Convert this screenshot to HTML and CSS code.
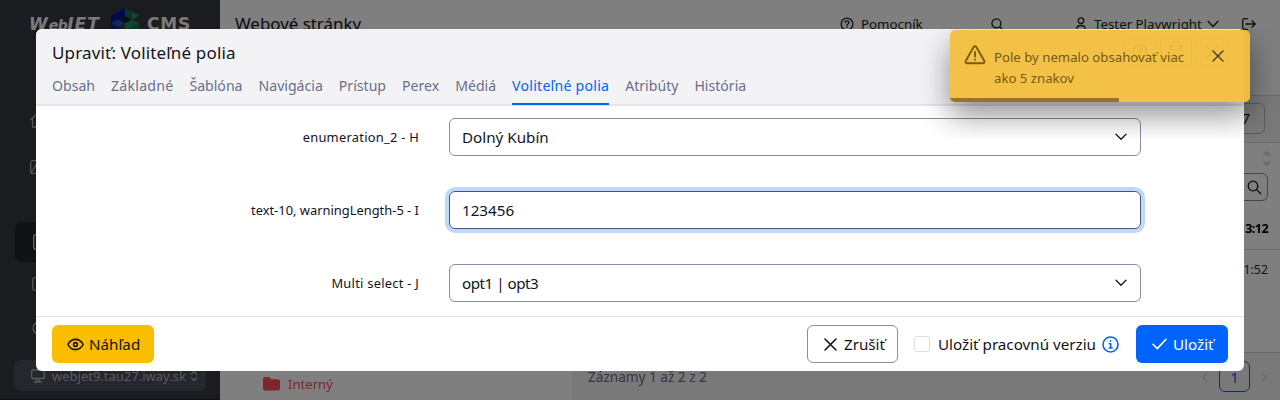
FILE: index.html
```
<!DOCTYPE html>
<html lang="sk">
<head>
<meta charset="utf-8">
<title>WebJET CMS</title>
<link rel="stylesheet" href="styles.css">
</head>
<body>
<div class="app">
  <aside class="sidebar">
    <div class="logo">
      <span class="logo-web">W<span class="logo-small">eb</span>JET</span>
      <svg class="logo-cube" width="28" height="30" viewBox="0 0 28 30"><path d="M0 7.500 14 0v15L0 22z" fill="#08149c"/><path d="M14 0 28 7.500 21 11.500 14 8z" fill="#238a52"/><path d="M14 0v15l7-3.500V4z" fill="#1d6a42"/><path d="M21 11.500 28 8 21 4z" fill="#27945a"/><path d="M0 15.500l7-4 7 4-7 4z" fill="#1a58a8"/><path d="M7 11.500l7-3.500 7 3.500-7 4z" fill="#0a2440"/><path d="M14 15.500l7-4 7 4-14 7.500z" fill="#1f8a5a"/><path d="M0 15.500 14 23v7L0 22z" fill="#0c1f9c"/><path d="M14 23l14-7.500v7L14 30z" fill="#1c6a50"/></svg>
      <span class="logo-cms">CMS</span>
    </div>
    <nav class="menu">
      <span class="menu-item home"><svg width="16" height="16" viewBox="0 0 16 16"><path d="M.7 7.500 8 1l7.300 6.500M2.500 6.500V15h4v-5h3v5h4V6.500"/></svg></span>
      <span class="menu-item image"><svg width="16" height="14" viewBox="0 0 16 14"><rect x=".7" y=".7" width="14.600" height="12.600" rx="2"/><path d="M1 13l5-8 4 6 2-2 3 3"/></svg></span>
      <span class="menu-item active"><svg width="12" height="16" viewBox="0 0 12 16"><rect x=".7" y=".7" width="10.600" height="14.600" rx="2"/></svg></span>
      <span class="menu-item page"><svg width="13" height="14" viewBox="0 0 13 14"><rect x=".7" y=".7" width="11.600" height="12.600" rx="2"/></svg></span>
      <span class="menu-item globe"><svg width="14" height="14" viewBox="0 0 14 14"><circle cx="7" cy="7" r="6"/><circle cx="7" cy="7" r="2.500"/></svg></span>
    </nav>
    <div class="domain">
      <svg width="14" height="14" viewBox="0 0 14 14"><rect x=".7" y="1" width="12.600" height="8.500" rx="1.200"/><path d="M5.500 10v2.500M8.500 10v2.500M3.500 13h7"/></svg>
      <span class="domain-name">webjet9.tau27.iway.sk</span>
      <svg class="domain-arrows" width="8" height="12" viewBox="0 0 8 12"><path d="M1.500 4 4 1.500 6.500 4M1.500 8 4 10.500 6.500 8"/></svg>
    </div>
  </aside>
  <div class="content">
    <header class="topbar">
      <span class="page-title">Webové stránky</span>
      <span class="top-link help"><svg width="14" height="14" viewBox="0 0 14 14"><circle cx="7" cy="7" r="5.900"/><path d="M5.200 5.600c0-2.400 3.700-2.300 3.700 0C8.900 7 7 6.900 7 8.300M7 9.900v.6"/></svg><span class="t-help">Pomocník</span></span>
      <span class="top-link search"><svg width="13" height="13" viewBox="0 0 13 13"><circle cx="5.400" cy="5.400" r="4.500"/><path d="M8.700 8.700 12.300 12.300"/></svg></span>
      <span class="top-link user"><svg width="10" height="14" viewBox="0 0 10 14"><circle cx="5" cy="3.700" r="2.800"/><path d="M.8 13.300v-1.500c0-4.400 8.400-4.400 8.400 0v1.500z"/></svg><span class="t-user">Tester Playwright</span><svg width="12" height="8" viewBox="0 0 12 8"><path d="M1 1.300 6 6.500 11 1.300"/></svg></span>
      <span class="top-link logout"><svg width="14" height="12" viewBox="0 0 14 12"><path d="M5.500.7h-3C1.200.7.700 1.200.7 2.500v7c0 1.300.5 1.800 1.800 1.800h3M4 6h9M10 2.800 13.200 6 10 9.200"/></svg></span>
    </header>
    <div class="columns">
      <div class="tree">
        <svg width="17" height="14" viewBox="0 0 17 14"><path d="M0 2.200C0 1 .9 0 2.100 0h4l2.200 2.200h6.600c1.200 0 2.100 1 2.100 2.100v7.100c0 1.200-1 2.100-2.100 2.100H2.100C.9 13.500 0 12.600 0 11.400z"/></svg>
        <span>Interný</span>
      </div>
      <div class="grid">
        <div class="toolbar"><span class="tool">7</span></div>
        <div class="grid-head">
          <svg class="sort" width="10" height="17" viewBox="0 0 10 17"><path d="M5 0l4.500 5.500H.5zM5 17l4.500-5.500H.5z"/></svg>
          <span class="filter"><svg width="15" height="15" viewBox="0 0 15 15"><circle cx="6" cy="6" r="4.800"/><path d="M9.600 9.600 13.800 13.800"/></svg></span>
        </div>
        <div class="grid-row strong">13:12</div>
        <div class="grid-row last">21:52</div>
        <footer class="grid-foot">
          <span class="records">Záznamy 1 až 2 z 2</span>
          <span class="pager"><svg width="6" height="10" viewBox="0 0 6 10"><path d="M5 1 1 5l4 4"/></svg><span class="page-no">1</span><svg width="6" height="10" viewBox="0 0 6 10"><path d="M1 1l4 4-4 4"/></svg></span>
        </footer>
      </div>
    </div>
  </div>
</div>

<div class="backdrop">
  <section class="modal">
    <header class="modal-head">
      <div class="modal-top">
        <h1 class="modal-title">Upraviť: Voliteľné polia</h1>
        <div class="modal-tools">
          <span class="tool-btn"><svg width="16" height="16" viewBox="0 0 14 14"><circle cx="7" cy="7" r="5.900"/><path d="M5.200 5.600c0-2.400 3.700-2.300 3.700 0C8.900 7 7 6.900 7 8.300M7 9.900v.6"/></svg></span>
          <span class="tool-btn"><svg width="16" height="16" viewBox="0 0 16 16"><path d="M2 6V2h4M10 2h4v4M14 10v4h-4M6 14H2v-4M2 2l4.500 4.500M14 2 9.500 6.500M14 14 9.500 9.500M2 14l4.500-4.500"/></svg></span>
          <span class="tool-btn"><svg width="14" height="14" viewBox="0 0 14 14"><path d="M2 2l10 10M12 2 2 12"/></svg></span>
        </div>
      </div>
      <nav class="tabs">
        <span class="tab">Obsah</span><span class="tab wide">Základné</span><span class="tab">Šablóna</span><span class="tab">Navigácia</span><span class="tab">Prístup</span><span class="tab">Perex</span><span class="tab">Médiá</span><span class="tab wide current">Voliteľné polia</span><span class="tab">Atribúty</span><span class="tab">História</span>
      </nav>
    </header>
    <div class="form">
      <label class="label wide">enumeration_2 - H</label>
      <div class="field">Dolný Kubín<svg width="12" height="8" viewBox="0 0 12 8"><path d="M1 1.200 6 6.300 11 1.200"/></svg></div>
      <label class="label">text-10, warningLength-5 - I</label>
      <div class="field focus">123456</div>
      <label class="label wide">Multi select - J</label>
      <div class="field"><span class="options">opt1 | opt3</span><svg width="12" height="8" viewBox="0 0 12 8"><path d="M1 1.200 6 6.300 11 1.200"/></svg></div>
    </div>
    <footer class="modal-foot">
      <button class="btn preview"><svg width="17" height="13" viewBox="0 0 17 13"><path d="M.9 6.500C4.400-.3 12.600-.3 16.100 6.500 12.600 13.300 4.400 13.300.9 6.500z"/><circle cx="8.500" cy="6.500" r="1.900"/></svg>Náhľad</button>
      <button class="btn cancel"><svg width="13" height="13" viewBox="0 0 13 13"><path d="M1 1l11 11M12 1 1 12"/></svg>Zrušiť</button>
      <span class="check"></span>
      <span class="check-label">Uložiť pracovnú verziu</span>
      <svg class="info" width="17" height="17" viewBox="0 0 17 17"><circle cx="8.500" cy="8.500" r="7.500"/><path d="M7.300 7.700h1.400v4M7.200 12h3M8.500 4.900v.3"/></svg>
      <button class="btn save"><svg width="15" height="12" viewBox="0 0 15 12"><path d="M1 6.300 5.300 10.600 14 1.300"/></svg>Uložiť</button>
    </footer>
  </section>
</div>

<div class="toast-area">
  <div class="toast">
    <svg class="warn" width="22" height="20" viewBox="0 0 22 20"><path d="M11 1.300c.6 0 1.200.3 1.500.9l7.700 13.500c.7 1.300-.1 2.600-1.500 2.600H3.300c-1.400 0-2.200-1.300-1.500-2.600L9.500 2.200c.3-.6.9-.9 1.500-.9z"/><path d="M11 7v4.500M11 14.400v.3"/></svg>
    <div class="toast-text">Pole by nemalo obsahovať viac<br>ako 5 znakov</div>
    <svg class="close" width="12" height="12" viewBox="0 0 12 12"><path d="M1 1l10 10M11 1 1 11"/></svg>
    <span class="progress"></span>
  </div>
</div>
</body>
</html>
```
FILE: styles.css
```
* { box-sizing: border-box; }
body {
  margin: 0;
  height: 400px;
  overflow: hidden;
  font-family: "Noto Sans", sans-serif;
  font-size: 15.2px;
  line-height: 24px;
  color: #13151b;
}
svg { display: block; flex: none; fill: none; stroke: currentColor; stroke-width: 1.3; stroke-linecap: round; stroke-linejoin: round; }

.app { display: flex; height: 400px; }
.sidebar { width: 220px; background: #363841; color: #d2d2d6; display: flex; flex-direction: column; border-bottom: 1px solid #261827; }
.logo { height: 40px; padding: 8px 0 0 29px; display: flex; align-items: flex-start; font-weight: 700; line-height: 32px; color: #f4f4f4; }
.logo svg { stroke: none; }
.logo-web { width: 82px; font-size: 17px; font-style: italic; font-family: "DejaVu Sans", sans-serif; letter-spacing: 1px; white-space: nowrap; }
.logo-small { font-size: 14px; letter-spacing: -.500px; }
.logo-cms { margin-left: 8px; font-size: 17px; font-family: "DejaVu Sans", sans-serif; letter-spacing: .8px; }
.menu { display: flex; flex-direction: column; padding: 0 14px; color: #a8a8ad; }
.menu-item { height: 40px; display: flex; align-items: center; padding-left: 16px; border-radius: 6px; }
.home { margin-top: 60px; }
.image { margin-top: 7px; }
.active { margin: 35px 0 0 1px; padding-left: 18px; background: #222429; color: #d8d8d8; }
.page { height: 44px; padding-left: 18px; }
.globe { height: 44px; padding-left: 18px; }
.domain { margin: 10px 14px 0; height: 31px; border-radius: 6px; background: #4a4e5e; color: #b4b5ba; display: flex; align-items: center; padding-left: 17px; }
.domain-name { margin-left: 7px; width: 138px; font-size: 13px; white-space: nowrap; }

.content { flex: 1; display: flex; flex-direction: column; background: #fff; }
.topbar { height: 95px; flex: none; display: flex; align-items: flex-start; padding: 12px 0 0 15px; }
.page-title { width: 605px; font-size: 16.900px; white-space: nowrap; }
.top-link { display: flex; align-items: center; height: 24px; gap: 7px; font-size: 13.300px; color: #1c1f27; white-space: nowrap; }
.help { width: 151px; }
.search { width: 84px; }
.user { width: 167px; padding-left: 1px; }
.t-user { width: 110px; margin: 0 -4px 0 1px; }
.columns { flex: 1; display: flex; }
.tree { width: 352px; display: flex; align-items: flex-end; padding: 0 0 4px 43px; gap: 8px; font-size: 13.100px; color: #ff4b58; }
.tree svg { fill: #ff4b58; stroke: none; margin-bottom: 5px; }
.grid { flex: 1; display: flex; flex-direction: column; border-top: 1px solid #d6d6de; font-size: 12.400px; }
.toolbar { height: 47px; background: #f2f2f5; border-bottom: 1px solid #d6d6de; display: flex; justify-content: flex-end; padding: 7px 15px 0; }
.tool { width: 40px; height: 31px; border: 1px solid #b4b5c2; border-radius: 6px; text-align: right; padding-right: 14px; line-height: 29px; font-size: 15px; }
.grid-head { height: 66px; display: flex; flex-direction: column; align-items: flex-end; padding-top: 7px; }
.sort { fill: #dadada; stroke: none; margin-right: 8px; }
.filter { margin: 6px 12px 0 0; width: 60px; height: 28px; border: 1px solid #868ba4; border-radius: 6px; display: flex; align-items: center; justify-content: flex-end; padding-right: 5px; }
.grid-row { height: 41px; padding: 8px 12px 0; text-align: right; border-bottom: 1px solid #d6d6de; color: #2a2d35; }
.strong { font-weight: 700; color: #000; letter-spacing: -.500px; }
.last { height: 103px; }
.grid-foot { flex: 1; background: #f2f2f5; display: flex; justify-content: space-between; align-items: center; padding: 0 13px 0 16px; font-size: 13.600px; color: #6b6f80; }
.pager { display: flex; align-items: center; gap: 11px; color: #cfcfd3; }
.page-no { width: 31px; height: 31px; border: 1px solid #0063fb; border-radius: 6px; color: #0063fb; text-align: center; line-height: 30px; font-size: 15px; }

.backdrop { position: absolute; inset: 0; padding: 29px 36px; background: rgba(0, 0, 0, .5); }
.modal { height: 342px; border-radius: 6px; background: #fff; overflow: hidden; display: flex; flex-direction: column; }
.modal-head { height: 77px; background: #f3f3f6; border-bottom: 2px solid #e4e4ea; padding: 0 16px; }
.modal-top { display: flex; justify-content: space-between; height: 46px; padding-top: 8px; }
.modal-title { margin: 3px 0 0; font-size: 17px; font-weight: 400; line-height: 26px; letter-spacing: .16px; }
.modal-tools { display: flex; gap: 4px; }
.tool-btn { width: 32px; height: 30px; border: 1px solid #868ea5; border-radius: 6px; display: flex; align-items: center; justify-content: center; }
.tabs { display: flex; gap: 16px; font-size: 14.100px; line-height: 22px; color: #686f89; }
.tab { height: 30px; white-space: nowrap; }
.wide { letter-spacing: .25px; }
.current { color: #0063fb; border-bottom: 2px solid #0063fb; }
.form { flex: 1; display: grid; grid-template-columns: 383px 692px; grid-auto-rows: 38px; row-gap: 35px; column-gap: 30px; padding-top: 12px; }
.label { text-align: right; font-size: 12.900px; line-height: 38px; }
.field { border: 1px solid #868ea5; border-radius: 6px; display: flex; justify-content: space-between; align-items: center; padding: 0 13px 0 12px; }
.options { letter-spacing: -.5px; }
.focus { border-color: #4c556c; box-shadow: 0 0 0 4px #bfd8fe; }
.modal-foot { height: 55px; border-top: 1px solid #dedfe7; display: flex; align-items: center; padding: 0 16px; }
.btn { height: 38px; border: 1px solid transparent; border-radius: 6px; display: flex; align-items: center; gap: 6px; padding: 0 0 0 14px; font: inherit; color: #13151b; }
.btn svg { stroke-width: 1.6; }
.preview { width: 102px; gap: 5px; background: #fabd00; margin-right: auto; }
.cancel { width: 91px; gap: 7px; padding-left: 16px; background: #fff; border-color: #868ea5; }
.check { width: 16px; height: 16px; margin-left: 16px; border: 1px solid #dcdde5; border-radius: 3px; }
.check-label { margin-left: 8px; width: 158px; white-space: nowrap; }
.info { margin: 0 17px 0 6px; color: #0063fb; stroke-width: 1.600; }
.save { width: 92px; background: #0063fb; color: #fff; padding-left: 15px; }

.toast-area { position: absolute; top: 29px; right: 0; width: 380px; height: 109px; overflow: hidden; }
.toast { position: relative; width: 300px; height: 72px; margin: 1px 0 0 50px; border-radius: 5px; overflow: hidden; background: rgba(244, 190, 64, .96); display: flex; align-items: flex-start; padding: 16px 26px 0 14px; font-size: 13.200px; line-height: 21px; color: #765b13; }
.toast-area::before { content: ""; position: absolute; left: 50px; top: 1px; width: 300px; height: 72px; border-radius: 5px; box-shadow: 0 14px 30px rgba(0, 0, 0, .42); }
.warn { stroke-width: 1.900; margin-top: -1px; }
.toast-text { margin: 1px 0 0 8px; flex: 1; white-space: nowrap; }
.close { color: #3c3829; margin-top: 4px; }
.progress { position: absolute; left: 0; bottom: 0; width: 169px; height: 4px; background: #957529; }
```
